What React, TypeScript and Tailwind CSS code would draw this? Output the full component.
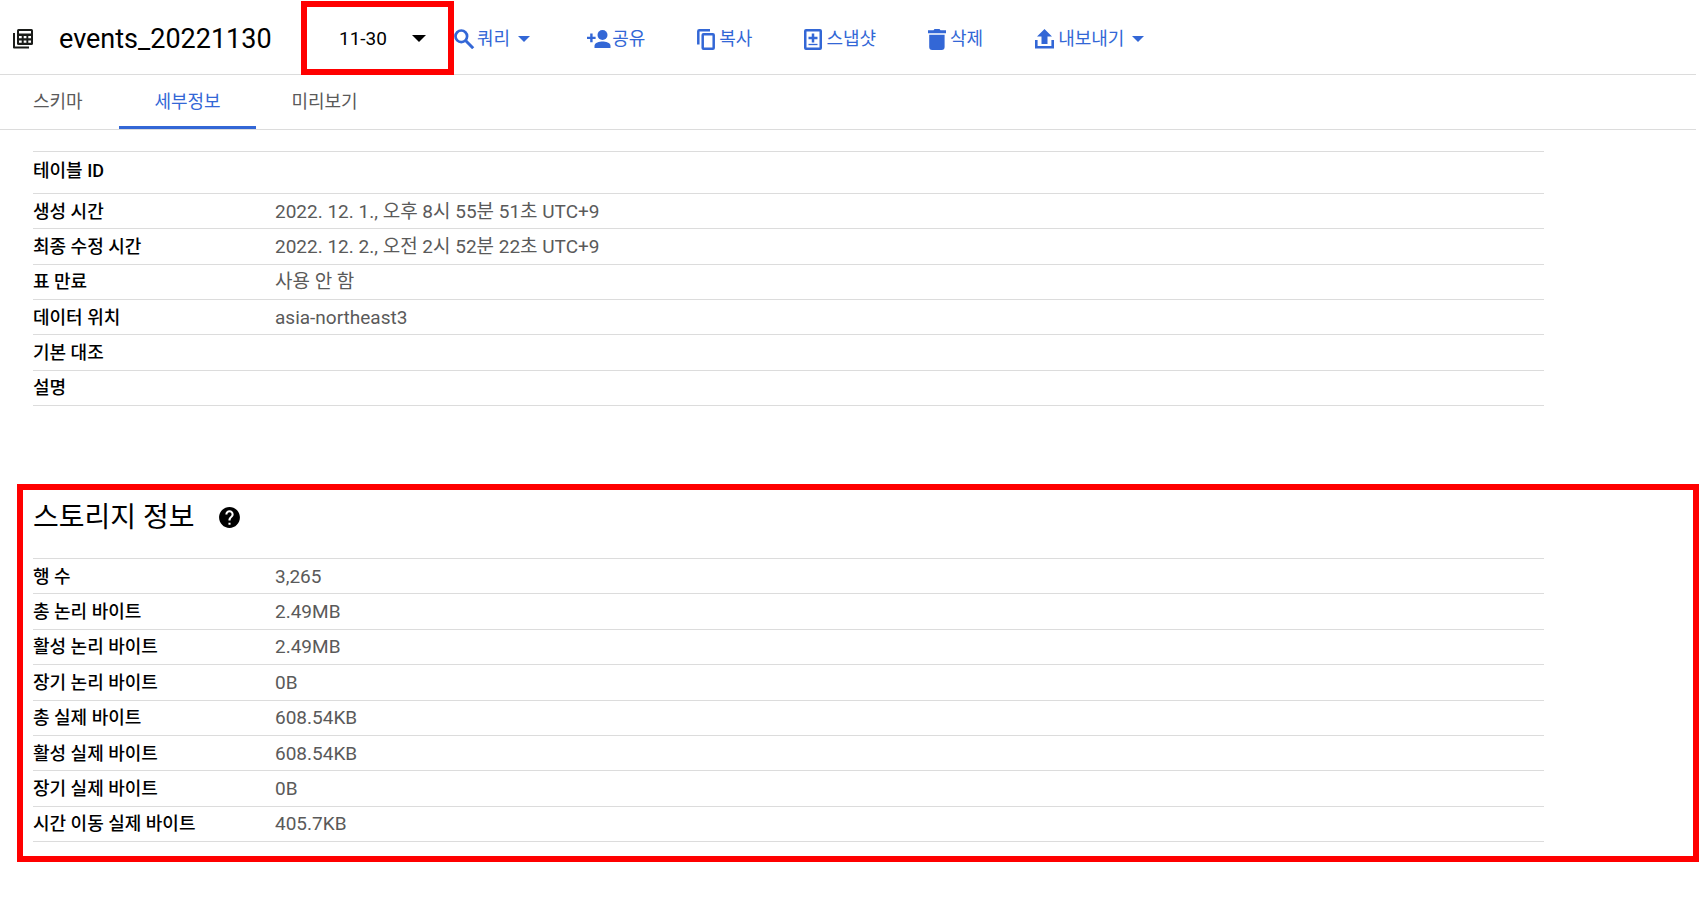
import type { ReactNode } from "react";
import { MdHelp } from "react-icons/md";

type Row = { label: string; value: string };

const details: Row[] = [
  { label: "테이블 ID", value: "" },
  { label: "생성 시간", value: "2022. 12. 1., 오후 8시 55분 51초 UTC+9" },
  { label: "최종 수정 시간", value: "2022. 12. 2., 오전 2시 52분 22초 UTC+9" },
  { label: "표 만료", value: "사용 안 함" },
  { label: "데이터 위치", value: "asia-northeast3" },
  { label: "기본 대조", value: "" },
  { label: "설명", value: "" },
];

const storage: Row[] = [
  { label: "행 수", value: "3,265" },
  { label: "총 논리 바이트", value: "2.49MB" },
  { label: "활성 논리 바이트", value: "2.49MB" },
  { label: "장기 논리 바이트", value: "0B" },
  { label: "총 실제 바이트", value: "608.54KB" },
  { label: "활성 실제 바이트", value: "608.54KB" },
  { label: "장기 실제 바이트", value: "0B" },
  { label: "시간 이동 실제 바이트", value: "405.7KB" },
];

function TableIcon() {
  return (
    <svg viewBox="0 0 20 20" className="size-5 shrink-0" aria-hidden="true">
      <path d="M1 4v14.5h15" fill="none" stroke="#1a1c19" strokeWidth="2" strokeLinejoin="round" />
      <rect x="4" y="0" width="16" height="16" rx="1.5" fill="#1a1c19" />
      <path
        fill="#fff"
        d="M6 2h12v2.5H6zM6 7h2.7v2.2H6zM10.7 7h2.7v2.2h-2.7zM15.3 7H18v2.2h-2.7zM6 11.5h2.7v2.2H6zM10.7 11.5h2.7v2.2h-2.7zM15.3 11.5H18v2.2h-2.7z"
      />
    </svg>
  );
}

function SearchIcon() {
  return (
    <svg viewBox="0 0 22 20" className="h-5 w-[22px]" fill="none" stroke="currentColor" aria-hidden="true">
      <circle cx="7.3" cy="7.3" r="5.8" strokeWidth="2.7" />
      <path d="m11.8 11.8 7.4 7.4" strokeWidth="3" />
    </svg>
  );
}

function PersonAddIcon() {
  return (
    <svg viewBox="0 0 29 18" className="h-[18px] w-[29px]" fill="currentColor" aria-hidden="true">
      <circle cx="20.5" cy="5" r="5" />
      <path d="M12.5 18v-2.2c0-3.2 5-4.4 8-4.4s8 1.2 8 4.4V18z" />
      <path d="M8.2 3.5h2.4v3.2h3v2.4h-3v3.2H8.2V9.1H5V6.7h3.2z" />
    </svg>
  );
}

function CopyIcon() {
  return (
    <svg viewBox="0 0 18 21" className="h-[21px] w-[18px]" fill="none" stroke="currentColor" aria-hidden="true">
      <path d="M1.3 15.5V2.3q0-1 1-1H13" strokeWidth="2.5" />
      <rect x="5.7" y="5.2" width="11" height="14.5" rx="0.8" strokeWidth="2.5" />
    </svg>
  );
}

function SnapshotIcon() {
  return (
    <svg viewBox="0 0 18 21" className="h-[21px] w-[18px]" fill="none" stroke="currentColor" aria-hidden="true">
      <rect x="1.25" y="1.25" width="15.5" height="18.5" rx="0.75" strokeWidth="2.5" />
      <path d="M9 4.5v9M4.500 9h9" strokeWidth="2.5" />
      <path d="M4.5 15.5h9" strokeWidth="1.3" />
    </svg>
  );
}

function TrashIcon() {
  return (
    <svg viewBox="0 0 18 21" className="h-[21px] w-[18px]" fill="currentColor" aria-hidden="true">
      <path d="M0 1.3h5.5L6.500 0h5l1 1.3H18v3H0zM1.2 5.8h15.4V18q0 3-3 3H4.200q-3 0-3-3z" />
    </svg>
  );
}

function ExportIcon() {
  return (
    <svg viewBox="0 0 19 20" className="h-5 w-[19px]" fill="currentColor" aria-hidden="true">
      <path d="M9.500 0 17 7.500h-4.500V15h-6V7.500H2zM0 11h2.600v5.900h13.800V11H19v8.500H0z" />
    </svg>
  );
}

function Caret() {
  return (
    <svg viewBox="0 0 12 6" className="h-1.5 w-3" fill="currentColor" aria-hidden="true">
      <path d="M0 0h12L6 6z" />
    </svg>
  );
}

function Action({ icon, label, menu, tight }: { icon: ReactNode; label: string; menu?: boolean; tight?: boolean }) {
  return (
    <button
      type="button"
      className={`flex items-center whitespace-nowrap text-lg text-[#3367d6] ${tight ? "gap-px" : "gap-1"}`}
    >
      {icon}
      <span className="flex items-center gap-2">
        {label}
        {menu && <Caret />}
      </span>
    </button>
  );
}

function InfoTable({ rows, name, size }: { rows: Row[]; name: string; size: string }) {
  return (
    <table aria-label={name} className={`w-full table-fixed border-collapse text-left leading-6 ${size}`}>
      <colgroup>
        <col className="w-[242px]" />
        <col />
      </colgroup>
      <tbody>
        {rows.map((row) => (
          <tr key={row.label} className="border-y border-[#dcdcdc]">
            <th scope="row" className="p-0 pt-px text-lg leading-6 font-medium text-black">
              {row.label}
            </th>
            <td className="p-0 pt-px text-[19px] text-[#5a5a5a]">{row.value}</td>
          </tr>
        ))}
      </tbody>
    </table>
  );
}

export default function App() {
  return (
    <main className="min-h-screen bg-white pr-px font-['Roboto','Noto_Sans_CJK_KR',sans-serif] text-black" lang="ko">
      <header className="mr-[3px] flex h-[75px] items-center border-b border-[#dcdcdc] pl-[13px]">
        <span className="pt-1">
          <TableIcon />
        </span>
        <h1 className="ml-[26px] w-[242px] pt-1 text-[27px]">events_20221130</h1>
        <div className="relative mt-px h-[74px] w-[153px] shrink-0">
          <select
            aria-label="날짜"
            className="size-full appearance-none border-[6px] border-[#ff0000] bg-white pt-[3px] pl-8 text-[19px]"
            defaultValue="11-30"
          >
            <option>11-30</option>
          </select>
          <svg viewBox="0 0 14 7" className="pointer-events-none absolute top-[34px] right-7 h-[7px] w-3.5" aria-hidden="true">
            <path d="M0 0h14L7 7z" />
          </svg>
        </div>
        <nav aria-label="작업" className="flex items-center gap-[52px] pt-1">
          <Action icon={<SearchIcon />} label="쿼리" menu tight />
          <Action icon={<PersonAddIcon />} label="공유" tight />
          <Action icon={<CopyIcon />} label="복사" />
          <Action icon={<SnapshotIcon />} label="스냅샷" />
          <Action icon={<TrashIcon />} label="삭제" />
          <Action icon={<ExportIcon />} label="내보내기" menu />
        </nav>
      </header>

      <div role="tablist" className="mr-[3px] flex h-[55px] border-b border-[#dcdcdc] text-lg text-[#5a5a5a]">
        <button type="button" role="tab" aria-selected="false" className="w-[119px] pl-[33px] text-left">
          스키마
        </button>
        <button
          type="button"
          role="tab"
          aria-selected="true"
          className="h-[54px] w-[137px] border-b-[3px] border-[#3367d6] pt-0.5 text-[#3367d6]"
        >
          세부정보
        </button>
        <button type="button" role="tab" aria-selected="false" className="w-[137px]">
          미리보기
        </button>
      </div>

      <section className="mt-[21px] mr-[155px] ml-[33px]">
        <InfoTable
          rows={details}
          name="테이블 정보"
          size="h-[255px] [&_tr:first-child]:h-[42px] [&_tr:first-child>th]:pb-1"
        />
      </section>

      <section className="mt-[78px] ml-[17px] border-[6px] border-[#ff0000] pb-3.5 pl-2.5">
        <div className="flex h-[68px] items-start gap-[22px] pt-2.5">
          <h2 className="text-[28px] leading-9">스토리지 정보</h2>
          <button type="button" aria-label="도움말" className="mt-[5px]">
            <MdHelp className="size-[25px]" />
          </button>
        </div>
        <div className="mr-[149px]">
          <InfoTable rows={storage} name="스토리지 정보" size="h-[284px]" />
        </div>
      </section>
    </main>
  );
}
